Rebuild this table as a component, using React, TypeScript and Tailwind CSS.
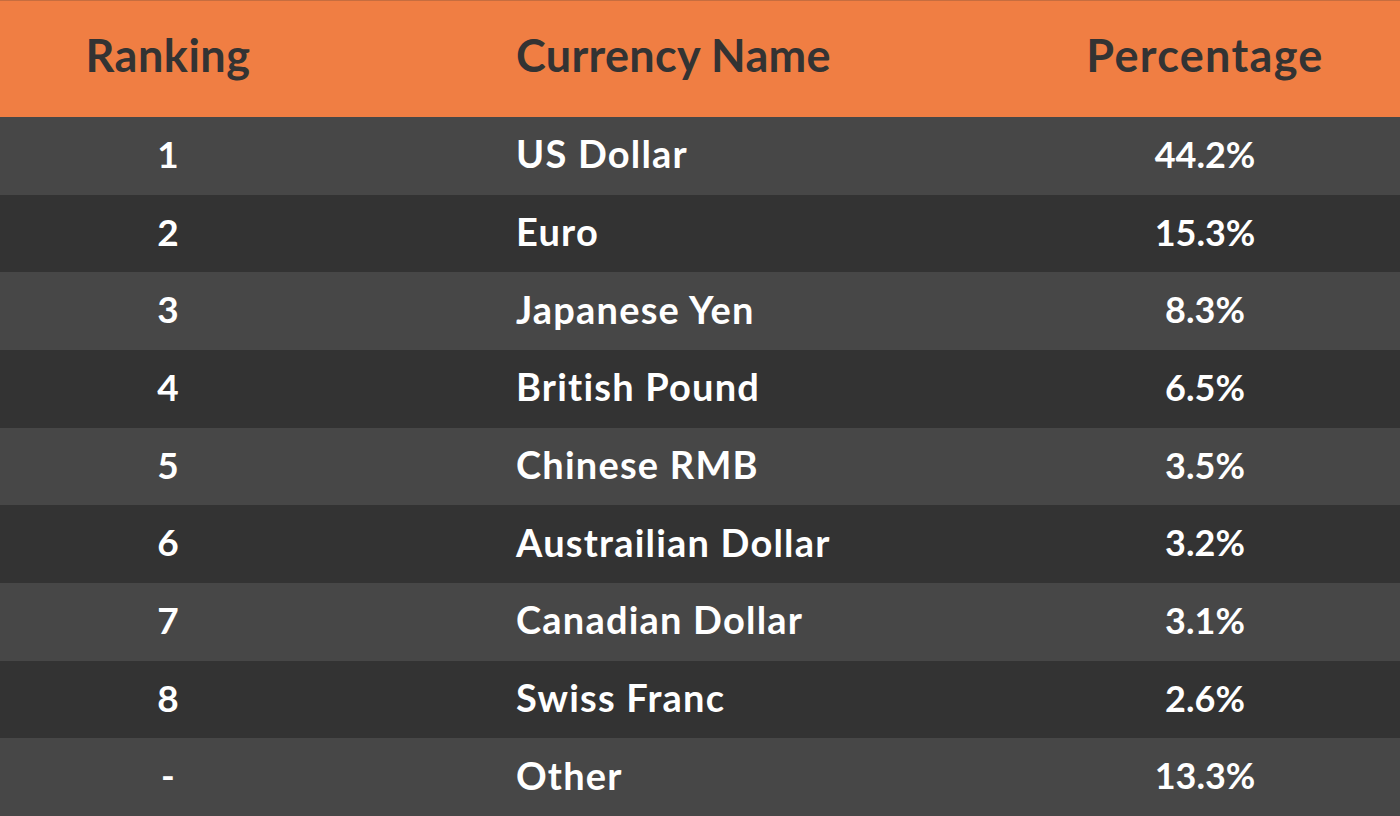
const rows = [
  { rank: '1', name: 'US Dollar', pct: '44.2%' },
  { rank: '2', name: 'Euro', pct: '15.3%' },
  { rank: '3', name: 'Japanese Yen', pct: '8.3%' },
  { rank: '4', name: 'British Pound', pct: '6.5%' },
  { rank: '5', name: 'Chinese RMB', pct: '3.5%' },
  { rank: '6', name: 'Austrailian Dollar', pct: '3.2%' },
  { rank: '7', name: 'Canadian Dollar', pct: '3.1%' },
  { rank: '8', name: 'Swiss Franc', pct: '2.6%' },
  { rank: '-', name: 'Other', pct: '13.3%' },
];

export default function App() {
  return (
    <div className="flex h-[816px] w-[1400px] flex-col overflow-hidden font-['Lato',sans-serif]">
      <div className="grid h-[117px] shrink-0 grid-cols-[336px_676px_1fr] items-center border-t border-[#c66d3f] bg-[#f07e43] pb-[6px] text-[45px] font-bold text-[#333333]">
        <div className="text-center tracking-[0.5px]">Ranking</div>
        <div className="pl-[180px] tracking-[0.3px]">Currency Name</div>
        <div className="pr-[2px] text-center tracking-[1.3px]">Percentage</div>
      </div>
      {rows.map((r, i) => (
        <div
          key={r.rank + r.name}
          className={`grid flex-1 grid-cols-[336px_676px_1fr] items-center pb-[4px] font-bold text-white ${
            i % 2 === 0 ? 'bg-[#474747]' : 'bg-[#333333]'
          }`}
        >
          <div className="text-center text-[37px]">{r.rank}</div>
          <div className="pl-[180px] text-[38px] tracking-[1.2px]">{r.name}</div>
          <div className="pr-[2px] text-center text-[36px]">{r.pct}</div>
        </div>
      ))}
    </div>
  );
}
